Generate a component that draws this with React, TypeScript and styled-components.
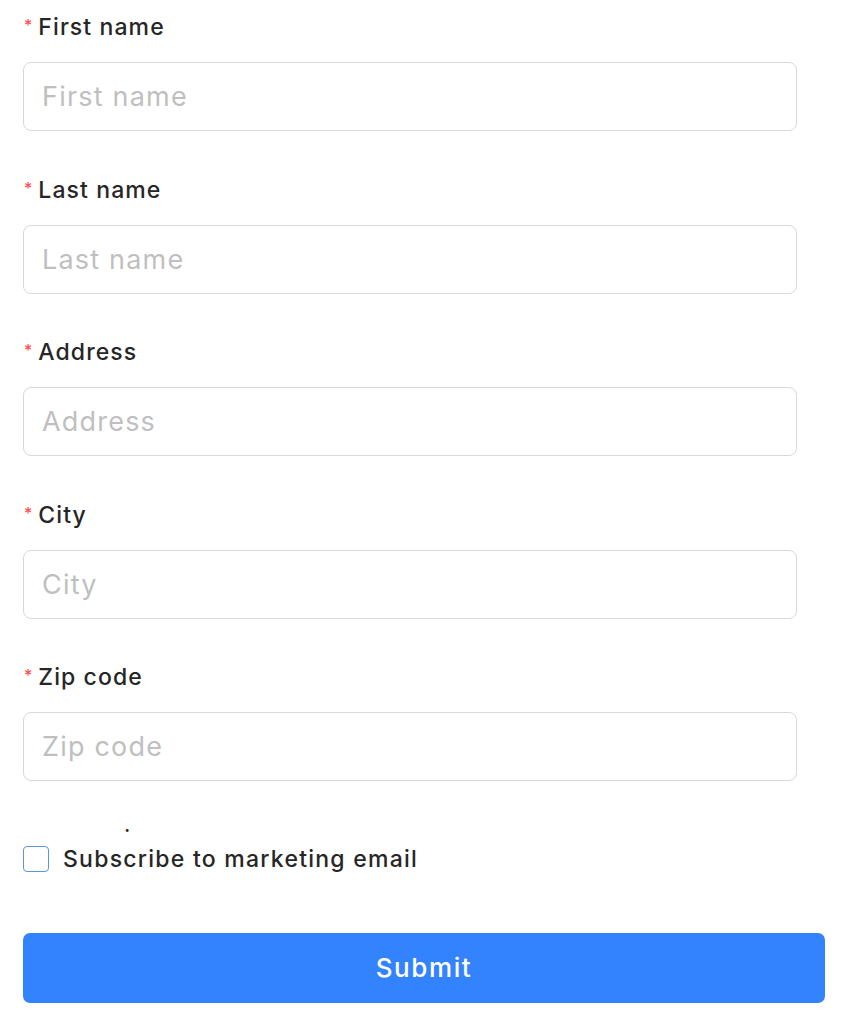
import React from "react";
import styled, { createGlobalStyle } from "styled-components";

const Global = createGlobalStyle`
  html, body { margin: 0; padding: 0; background: #fff; }
  body { font-family: "Inter", "Noto Sans", sans-serif; color: #262626; }
  * { box-sizing: border-box; }
`;

const Form = styled.form`
  display: flex;
  flex-direction: column;
  padding: 10px 20px 0 23px;
  width: 845px;
`;

const Field = styled.div`
  display: flex;
  flex-direction: column;
  gap: 18px;
  margin-bottom: 41.5px;
  width: 774px;
`;

const Label = styled.label`
  display: flex;
  align-items: center;
  font-size: 23px;
  font-weight: 500;
  line-height: 34px;
  color: #262626;
  letter-spacing: 1.1px;
`;

const Star = styled.span`
  color: #ff4d4f;
  font-size: 16px;
  margin-right: 6px;
  margin-left: 1px;
  position: relative;
  top: -2px;
  letter-spacing: 0;
`;

const Input = styled.input`
  height: 69px;
  width: 100%;
  border: 1px solid #d9d9d9;
  border-radius: 8px;
  padding: 0 18px;
  font-family: inherit;
  font-size: 27px;
  letter-spacing: 1.2px;
  color: #262626;
  outline: none;
  &::placeholder { color: #bfbfbf; }
`;

const Dot = styled.div`
  height: 22px;
  padding-left: 101px;
  font-size: 22px;
  line-height: 2px;
  color: #262626;
`;

const CheckRow = styled.label`
  display: flex;
  align-items: center;
  gap: 14px;
  font-size: 23px;
  font-weight: 500;
  letter-spacing: 1.25px;
  color: #262626;
  margin-bottom: 60px;
`;

const Box = styled.span`
  width: 26px;
  height: 26px;
  border: 1.5px solid #5b96d9;
  border-radius: 4px;
  background: #fff;
`;

const Button = styled.button`
  width: 802px;
  height: 70px;
  border: none;
  border-radius: 7px;
  background: #3383ff;
  color: #fff;
  font-family: inherit;
  font-size: 26px;
  letter-spacing: 1.6px;
  font-weight: 500;
`;

const fields = ["First name", "Last name", "Address", "City", "Zip code"];

export default function App() {
  return (
    <>
      <Global />
      <Form onSubmit={(e) => e.preventDefault()}>
        {fields.map((f) => (
          <Field key={f}>
            <Label>
              <Star>*</Star>
              {f}
            </Label>
            <Input placeholder={f} />
          </Field>
        ))}
        <Dot>.</Dot>
        <CheckRow>
          <Box />
          Subscribe to marketing email
        </CheckRow>
        <Button type="submit">Submit</Button>
      </Form>
    </>
  );
}
